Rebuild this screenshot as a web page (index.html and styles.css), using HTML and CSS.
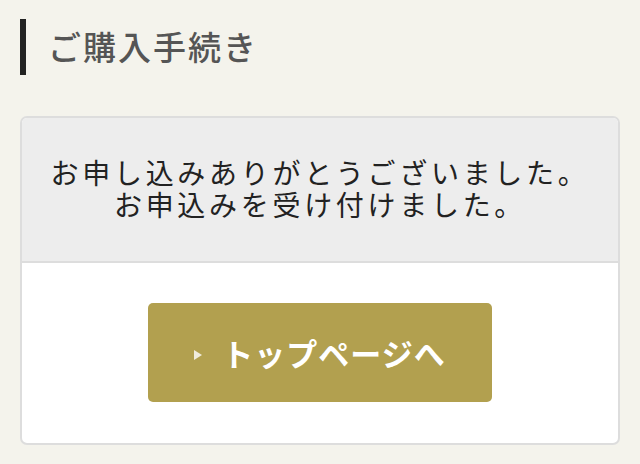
FILE: index.html
```html
<!DOCTYPE html>
<html lang="ja">
    <head>
        <meta charset="utf-8">
        <title>ご購入手続き</title>
        <link rel="stylesheet" href="styles.css">
    </head>
    <body>
        <h2 class="pageTitle">ご購入手続き</h2>
        <div class="box">
            <div class="boxHead">
                <p>お申し込みありがとうございました。<br>お申込みを受け付けました。</p>
            </div>
            <div class="boxBody">
                <a class="btnTop" href="#"><span class="arrow"></span>トップページへ</a>
            </div>
        </div>
    </body>
</html>
```
FILE: styles.css
```css
body
{
    margin: 0;
    padding: 19px 20px 0 20px;
    background-color: #f4f3ec;
    font-family: "Noto Sans CJK JP", "Noto Sans", sans-serif;
    color: #222;
}

.pageTitle
{
    margin: 0;
    height: 56px;
    line-height: 54px;
    border-left: 6px solid #222;
    padding-left: 22px;
    font-size: 33px;
    font-weight: 500;
    letter-spacing: 2px;
    color: #555;
}

.box
{
    margin-top: 41px;
    border: 2px solid #dddddd;
    border-radius: 7px;
    background-color: #fff;
    overflow: hidden;
}

.boxHead
{
    background-color: #ededed;
    border-bottom: 2px solid #dddddd;
    padding: 38px 0 0 0;
    height: 105px;
    text-align: center;
}

.boxHead p
{
    margin: 0;
    font-size: 28px;
    line-height: 32px;
    letter-spacing: 3.7px;
    font-weight: 400;
}

.boxBody
{
    padding: 40px 0 41px 0;
    display: flex;
    justify-content: center;
}

.btnTop
{
    display: flex;
    align-items: center;
    justify-content: center;
    width: 344px;
    height: 99px;
    background-color: #b2a04f;
    border-radius: 5px;
    color: #fff;
    text-decoration: none;
    font-size: 31px;
    font-weight: 700;
    letter-spacing: 1px;
}

.arrow
{
    display: block;
    width: 0;
    height: 0;
    border-top: 5px solid transparent;
    border-bottom: 5px solid transparent;
    border-left: 8px solid #f0ecdc;
    margin: 4px 20px 0 0;
}
```
